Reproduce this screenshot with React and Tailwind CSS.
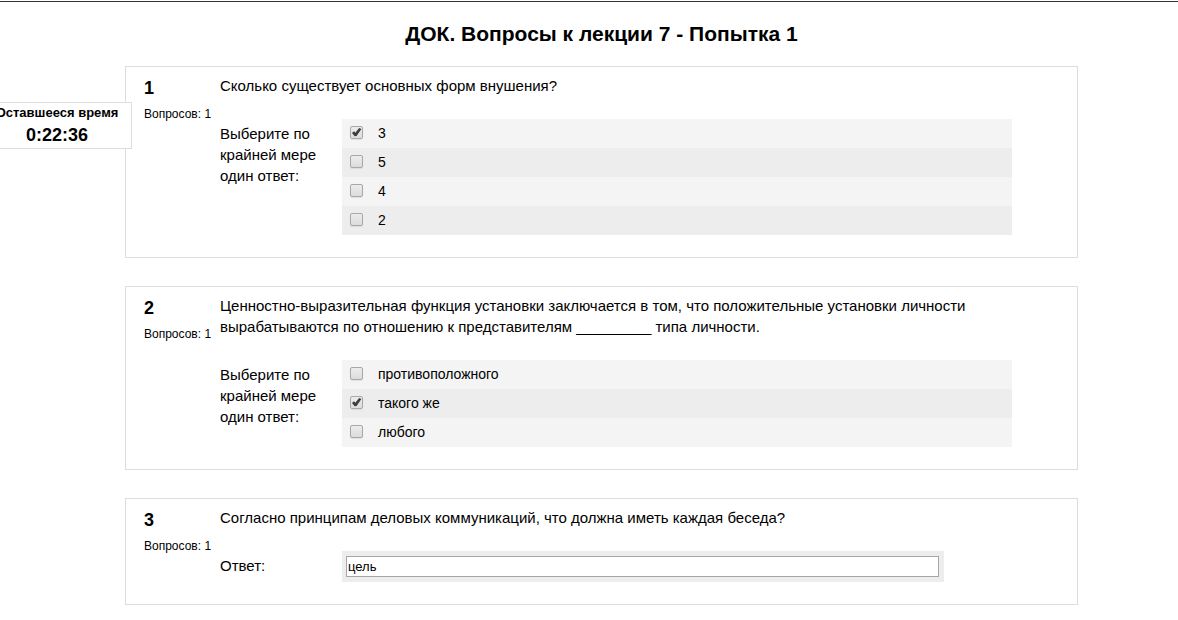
import { useId } from "react";

const questions = [
  {
    number: 1,
    text: "Сколько существует основных форм внушения?",
    options: [
      { label: "3", checked: true },
      { label: "5" },
      { label: "4" },
      { label: "2" },
    ],
  },
  {
    number: 2,
    text: "Ценностно-выразительная функция установки заключается в том, что положительные установки личности вырабатываются по отношению к представителям _________ типа личности.",
    options: [
      { label: "противоположного" },
      { label: "такого же", checked: true },
      { label: "любого" },
    ],
  },
  {
    number: 3,
    text: "Согласно принципам деловых коммуникаций, что должна иметь каждая беседа?",
    answer: "цель",
  },
];

function Option({ label, checked }) {
  return (
    <li className="odd:bg-[#f4f4f4] even:bg-[#ededed]">
      <label className="flex h-[29px] items-center gap-4 pl-2 text-sm">
        <span className="grid h-4 w-3 shrink-0 place-items-center pb-[3px]">
          <input
            type="checkbox"
            defaultChecked={checked}
            className="peer col-start-1 row-start-1 size-[13px] appearance-none rounded-[2px] border border-[#a8a8a8] bg-linear-to-b from-[#ececec] to-[#dcdcdc] shadow-[0_1px_1px_#00000014]"
          />
          <svg
            viewBox="0 0 13 13"
            className="pointer-events-none invisible col-start-1 row-start-1 size-[13px] peer-checked:visible"
            aria-hidden="true"
          >
            <path d="M2 6.9 4 5.2 5.4 6.7 9.1 1.9 11.4 3.1 6.6 10 4.7 10.2Z" fill="#3c3c3c" />
          </svg>
        </span>
        <span className="pb-0.5">{label}</span>
      </label>
    </li>
  );
}

function Choices({ options }) {
  const id = useId();
  return (
    <div role="group" aria-labelledby={id} className="flex pr-[65px]">
      <p id={id} className="w-[122px] shrink-0 pt-1 pr-5">
        Выберите по крайней мере один ответ:
      </p>
      <ul className="flex-1">
        {options.map((option) => (
          <Option key={option.label} {...option} />
        ))}
      </ul>
    </div>
  );
}

function TextAnswer({ value }) {
  const id = useId();
  return (
    <div className="flex pr-[133px]">
      <label htmlFor={id} className="w-[122px] shrink-0 pt-1">
        Ответ:
      </label>
      <div className="flex flex-1 bg-[#ededed] py-[5px] pr-[5px] pl-1">
        <input
          id={id}
          type="text"
          defaultValue={value}
          className="h-[21px] w-full border border-[#a6a6a6] bg-white px-px text-[13px]"
        />
      </div>
    </div>
  );
}

function Question({ number, text, options, answer }) {
  return (
    <section className="flex border border-[#dddddd] pt-2 pb-[22px] pl-[18px]">
      <div className="w-[76px] shrink-0">
        <h2 className="pt-px text-lg leading-6 font-bold">{number}</h2>
        <p className="pt-1 text-xs leading-5 whitespace-nowrap">Вопросов: 1</p>
      </div>
      <div className="flex min-w-0 flex-1 flex-col gap-[23px] text-[15px] leading-[21px]">
        <p className="pr-[65px]">{text}</p>
        {options ? <Choices options={options} /> : <TextAnswer value={answer} />}
      </div>
    </section>
  );
}

export default function App() {
  return (
    <div className="min-h-screen bg-white pt-px font-['Liberation_Sans',Arial,sans-serif] text-black">
      <main className="border-t border-[#333333] pr-[100px] pb-4 pl-[125px]">
        <h1 className="pt-[18px] pb-[18px] text-center text-[21px] leading-7 font-bold">
          ДОК. Вопросы к лекции 7 - Попытка 1
        </h1>
        <form className="flex flex-col gap-7">
          {questions.map((question) => (
            <Question key={question.number} {...question} />
          ))}
        </form>
      </main>
      <aside className="absolute top-[102px] -left-[18px] w-[150px] border border-[#dddddd] bg-white pb-px text-center font-bold whitespace-nowrap">
        <p className="text-[13px] leading-5">Оставшееся время</p>
        <p className="text-lg leading-6">0:22:36</p>
      </aside>
    </div>
  );
}
